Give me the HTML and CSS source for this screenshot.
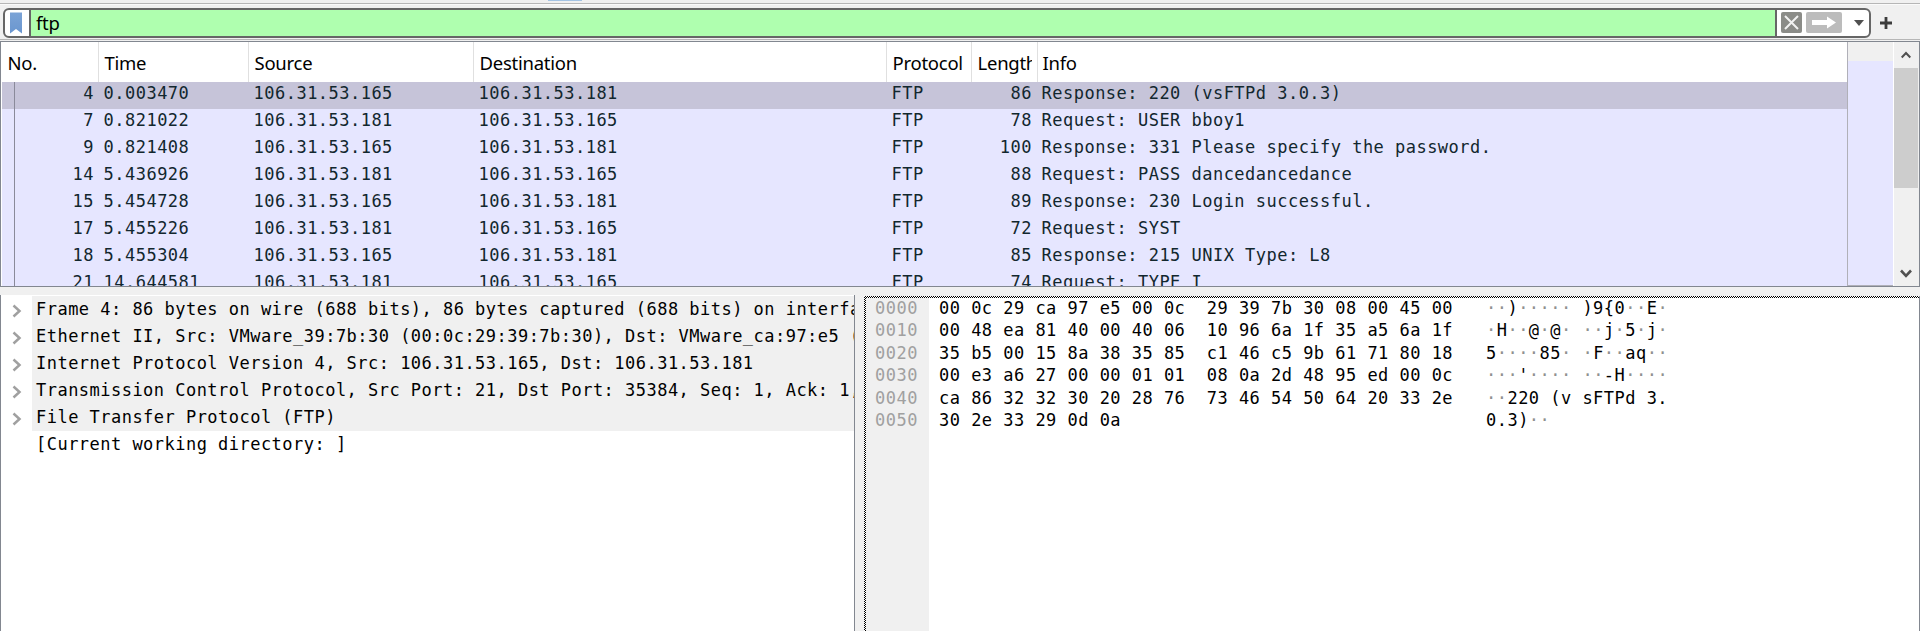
FILE: index.html
```html
<!DOCTYPE html>
<html lang="en">
<head>
<meta charset="utf-8">
<title>Packet capture</title>
<link rel="stylesheet" href="styles.css">
</head>
<body>
<div class="app">
  <div class="toolbar-edge"><span class="tool-active"></span></div>
  <div class="filter-bar">
    <div class="filter-box">
      <div class="bookmark">
        <svg width="12" height="22" viewBox="0 0 12 22"><defs><linearGradient id="bm" x1="0" y1="0" x2="0" y2="1"><stop offset="0" stop-color="#7ba3d6"/><stop offset="1" stop-color="#6a96cf"/></linearGradient></defs><path d="M0 0.5H12V21.5L6 17L0 21.5Z" fill="url(#bm)"/></svg>
      </div>
      <div class="filter-input"><span class="filter-text">ftp</span></div>
      <div class="filter-actions">
        <svg class="clear" width="21" height="21" viewBox="0 0 21 21"><rect width="21" height="21" rx="2" fill="#8b8c88"/><path d="M4 4L17 17M17 4L4 17" stroke="#f2f2f2" stroke-width="2"/></svg>
        <svg class="apply" width="36" height="21" viewBox="0 0 36 21"><rect width="36" height="21" rx="2" fill="#bcbcbc"/><path d="M6 8H21V4.5L30 10.5L21 16.5V13H6Z" fill="#fff"/></svg>
        <svg class="drop" width="10" height="6" viewBox="0 0 10 6"><path d="M0 0H10L5 6Z" fill="#505050"/></svg>
      </div>
    </div>
    <svg class="plus" width="12" height="12" viewBox="0 0 12 12"><path d="M6 0V12M0 6H12" stroke="#3c3c3c" stroke-width="2.8"/></svg>
  </div>
  <div class="packet-pane">
    <div class="packet-list">
      <div class="row head"><span>No.</span><span>Time</span><span>Source</span><span>Destination</span><span>Protocol</span><span class="clip">Length</span><span>Info</span></div>
      <div class="rows">
        <div class="row selected"><span>4</span><span>0.003470</span><span>106.31.53.165</span><span>106.31.53.181</span><span>FTP</span><span>86</span><span>Response: 220 (vsFTPd 3.0.3)</span></div>
        <div class="row"><span>7</span><span>0.821022</span><span>106.31.53.181</span><span>106.31.53.165</span><span>FTP</span><span>78</span><span>Request: USER bboy1</span></div>
        <div class="row"><span>9</span><span>0.821408</span><span>106.31.53.165</span><span>106.31.53.181</span><span>FTP</span><span>100</span><span>Response: 331 Please specify the password.</span></div>
        <div class="row"><span>14</span><span>5.436926</span><span>106.31.53.181</span><span>106.31.53.165</span><span>FTP</span><span>88</span><span>Request: PASS dancedancedance</span></div>
        <div class="row"><span>15</span><span>5.454728</span><span>106.31.53.165</span><span>106.31.53.181</span><span>FTP</span><span>89</span><span>Response: 230 Login successful.</span></div>
        <div class="row"><span>17</span><span>5.455226</span><span>106.31.53.181</span><span>106.31.53.165</span><span>FTP</span><span>72</span><span>Request: SYST</span></div>
        <div class="row"><span>18</span><span>5.455304</span><span>106.31.53.165</span><span>106.31.53.181</span><span>FTP</span><span>85</span><span>Response: 215 UNIX Type: L8</span></div>
        <div class="row"><span>21</span><span>14.644581</span><span>106.31.53.181</span><span>106.31.53.165</span><span>FTP</span><span>74</span><span>Request: TYPE I</span></div>
        <i class="related"></i>
      </div>
    </div>
    <div class="minimap"></div>
    <div class="scrollbar">
      <svg width="10" height="8" viewBox="0 0 10 8"><path d="M0.7 6.5L5 2L9.3 6.5" fill="none" stroke="#505050" stroke-width="2"/></svg>
      <div class="thumb"></div>
      <svg class="down" width="12" height="9" viewBox="0 0 12 9"><path d="M1 1.5L6 6.8L11 1.5" fill="none" stroke="#505050" stroke-width="2.6"/></svg>
    </div>
  </div>
  <div class="bottom">
    <div class="tree">
      <div class="node"><svg viewBox="0 0 10 14"><path d="M1.5 1.5L7.5 7L1.5 12.5"/></svg><span>Frame 4: 86 bytes on wire (688 bits), 86 bytes captured (688 bits) on interface</span></div>
      <div class="node"><svg viewBox="0 0 10 14"><path d="M1.5 1.5L7.5 7L1.5 12.5"/></svg><span>Ethernet II, Src: VMware_39:7b:30 (00:0c:29:39:7b:30), Dst: VMware_ca:97:e5 (</span></div>
      <div class="node"><svg viewBox="0 0 10 14"><path d="M1.5 1.5L7.5 7L1.5 12.5"/></svg><span>Internet Protocol Version 4, Src: 106.31.53.165, Dst: 106.31.53.181</span></div>
      <div class="node"><svg viewBox="0 0 10 14"><path d="M1.5 1.5L7.5 7L1.5 12.5"/></svg><span>Transmission Control Protocol, Src Port: 21, Dst Port: 35384, Seq: 1, Ack: 1,</span></div>
      <div class="node"><svg viewBox="0 0 10 14"><path d="M1.5 1.5L7.5 7L1.5 12.5"/></svg><span>File Transfer Protocol (FTP)</span></div>
      <div class="node leaf"><span>[Current working directory: ]</span></div>
    </div>
    <div class="hex">
      <div class="hex-body">
<pre class="offsets">0000
0010
0020
0030
0040
0050</pre>
<pre class="bytes">00 0c 29 ca 97 e5 00 0c  29 39 7b 30 08 00 45 00
00 48 ea 81 40 00 40 06  10 96 6a 1f 35 a5 6a 1f
35 b5 00 15 8a 38 35 85  c1 46 c5 9b 61 71 80 18
00 e3 a6 27 00 00 01 01  08 0a 2d 48 95 ed 00 0c
ca 86 32 32 30 20 28 76  73 46 54 50 64 20 33 2e
30 2e 33 29 0d 0a</pre>
<pre class="ascii"><i>··</i>)<i>·····</i> )9{0<i>··</i>E<i>·</i>
<i>·</i>H<i>··</i>@<i>·</i>@<i>·</i> <i>··</i>j<i>·</i>5<i>·</i>j<i>·</i>
5<i>····</i>85<i>·</i> <i>·</i>F<i>··</i>aq<i>··</i>
<i>···</i>'<i>····</i> <i>··</i>-H<i>····</i>
<i>··</i>220 (v sFTPd 3.
0.3)<i>··</i></pre>
      </div>
    </div>
  </div>
</div>
</body>
</html>
```
FILE: styles.css
```css
* { box-sizing: border-box; }
body { margin: 0; background: #f0f0f0; overflow: hidden; }
svg { display: block; flex: none; }
.app {
  width: 1920px; height: 631px; display: flex; flex-direction: column;
  font: 17px/27px Consolas, "DejaVu Sans Mono", monospace; letter-spacing: 0.475px; color: #000;
}
.toolbar-edge { height: 5px; border-bottom: 1px solid #fafafa; box-shadow: inset 0 -1px #b6b6b6; }
.tool-active { display: block; width: 34px; height: 1px; margin-left: 548px; background: #a3c3e3; }
.filter-bar { height: 36px; padding: 3px 0 3px 3px; display: flex; align-items: center; border-bottom: 1px solid #f0f0f0; box-shadow: inset 0 -1px #b6b6b6; }
.filter-box { width: 1868px; height: 30px; display: flex; border: 2px solid #666; border-radius: 6px; background: #fff; overflow: hidden; }
.bookmark { width: 26px; padding: 2px 0 0 5px; border-right: 2px solid #666; }
.filter-input { flex: 1; background: #afffaf; padding-left: 5px; }
.filter-text, .head { font-family: "Segoe UI", "Noto Sans", sans-serif; font-size: 18.5px; letter-spacing: -0.25px; }
.filter-text { display: block; line-height: 26px; }
.filter-actions { width: 94px; display: flex; align-items: center; border-left: 2px solid #666; padding-left: 4px; }
.apply { margin-left: 4px; }
.drop { margin-left: 12px; }
.plus { margin-left: 9px; }
.packet-pane { height: 246px; display: flex; border: 1px solid #828790; background: #fff; overflow: hidden; }
.packet-list { width: 1847px; padding-left: 1px; border-right: 1px solid #b0b0b8; overflow: hidden; }
.row { display: grid; grid-template-columns: 97px 150px 225px 413px 85px 65px 1fr; height: 27px; line-height: 23px; }
.row span { padding-left: 4.6px; white-space: pre; overflow: hidden; }
.rows { position: relative; background: #e6e6ff; color: #12272e; }
.rows .row span:nth-child(1), .rows .row span:nth-child(6) { text-align: right; padding-right: 5px; }
.selected { background: #c6c4d9; }
.related { position: absolute; left: 12px; top: 0; width: 1px; height: 100%; background: #8a8a9a; }
.head.row { height: 40px; line-height: 42px; }
.head span { border-right: 1px solid #e0e0e0; padding-left: 5.5px; }
.head span:last-child { border-right: 0; }
.head .clip { border-right: 5px solid #fff; box-shadow: 1px 0 #e0e0e0; }
.minimap { width: 45px; border-top: 19px solid #f0f0f0; border-bottom: 1px solid #b0b0b8; background: #e6e6ff; }
.scrollbar { width: 26px; background: #f0f0f0; border-left: 1px solid #fff; border-right: 1px solid #f0f0f0; display: flex; flex-direction: column; align-items: center; padding-top: 9px; }
.thumb { width: 24px; height: 120px; margin-top: 9px; background: #cdcdcd; }
.down { margin-top: 81px; }
.bottom { height: 344px; padding-top: 8px; display: flex; justify-content: space-between; }
.tree { width: 855px; background: #fff; border-left: 1px solid #828790; border-right: 1px solid #828790; padding-top: 1px; overflow: hidden; }
.node { display: flex; height: 27px; align-items: center; }
.node svg { width: 10px; height: 14px; margin: 3px 10px 0 11px; }
.node path { fill: none; stroke: #a0a0a0; stroke-width: 2.5; }
.node span { flex: 1; padding-left: 4px; background: #f0f0f0; white-space: pre; overflow: hidden; }
.leaf span { margin-left: 31px; background: #fff; }
.hex { width: 1056px; padding: 2px 0 0 2px; margin-top: 1px; border-right: 1px solid #828790; background: repeating-conic-gradient(#000 0 25%, #fff 0 50%) 0 0 / 2px 2px; }
.hex-body { display: flex; height: 100%; background: #fff; overflow: hidden; }
.hex-body pre { flex: none; margin: -1px 0 0; font: inherit; line-height: 22.4px; }
.offsets { width: 63px; padding-left: 9px; background: #f0f0f0; color: #a0a0a0; }
.bytes { width: 557px; padding-left: 10px; }
.ascii i { font-style: normal; color: #909090; }
```
